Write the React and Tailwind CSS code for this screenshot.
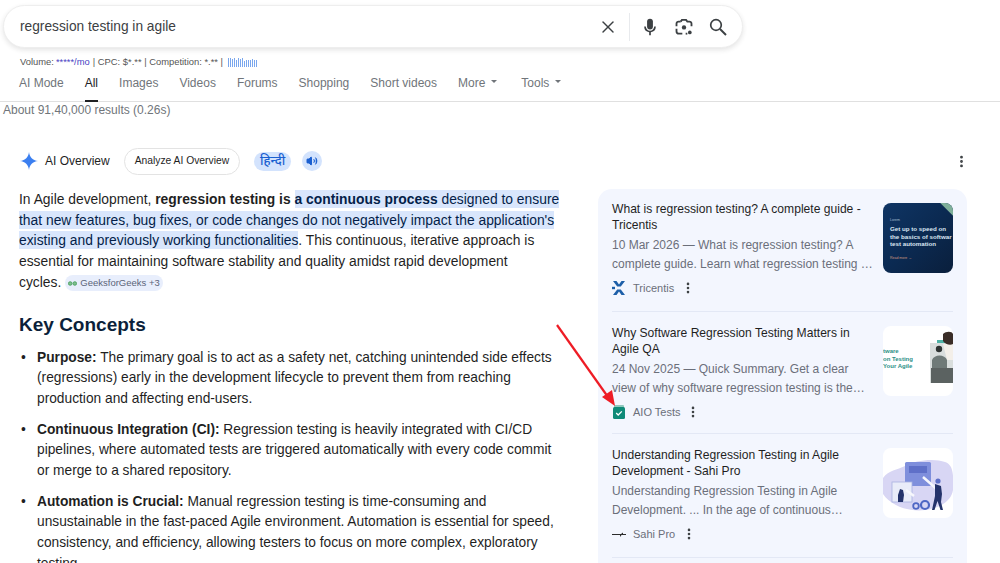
import React from 'react';
import { X, EllipsisVertical, Volume2 } from 'lucide-react';

const tabs = ['AI Mode', 'All', 'Images', 'Videos', 'Forums', 'Shopping', 'Short videos'];

const Spark = ({ size = 20 }) => (
  <svg width={size} height={size} viewBox="0 0 20 20">
    <path d="M10 0 C10.8 6 14 9.2 20 10 C14 10.8 10.8 14 10 20 C9.2 14 6 10.8 0 10 C6 9.2 9.2 6 10 0Z" fill="#3b7ff0" />
  </svg>
);

const MicIcon = () => (
  <svg width="20" height="20" viewBox="0 0 24 24" fill="#3c4043">
    <rect x="8.5" y="2" width="7" height="13" rx="3.5" />
    <path d="M5 11.5h2a5 5 0 0 0 10 0h2a7 7 0 0 1-6 6.8V22h-2v-3.7a7 7 0 0 1-6-6.8z" />
  </svg>
);

const LensIcon = () => (
  <svg width="20" height="20" viewBox="0 0 24 24" fill="none" stroke="#3c4043" strokeWidth="2.2">
    <path d="M8 5.5 9.500 3.500h5L16 5.500h2.500a2.500 2.500 0 0 1 2.500 2.500v3" />
    <path d="M3 11V8a2.500 2.500 0 0 1 2.500-2.500H8" />
    <path d="M3 14v3a3 3 0 0 0 3 3h4" />
    <path d="M14 20h2" />
    <circle cx="12" cy="12.500" r="2.600" fill="#3c4043" stroke="none" />
    <circle cx="19" cy="18.500" r="2.200" fill="#3c4043" stroke="none" />
  </svg>
);

const SearchIcon = () => (
  <svg width="20" height="20" viewBox="0 0 20 20" fill="none" stroke="#3c4043" strokeWidth="1.700">
    <circle cx="8" cy="8" r="5.300" />
    <path d="M12 12l6 6" strokeWidth="2" />
  </svg>
);

const TricentisLogo = () => (
  <svg width="14" height="14" viewBox="0 0 14 14" fill="#1d5fa8">
    <path d="M1 0h3.500L7 3.500 9.500 0H13L8.800 5.500H5.200z" />
    <path d="M5.200 8.500h3.600L13 14H9.500L7 10.500 4.500 14H1z" />
    <rect x="0" y="5.800" width="3" height="2.400" />
  </svg>
);

const AioLogo = () => (
  <svg width="12" height="14" viewBox="0 0 12 14">
    <rect x="1" y="0" width="10" height="3" rx="1" fill="#8fc8bd" />
    <rect x="0" y="2" width="12" height="12" rx="1.500" fill="#0f8a78" />
    <path d="M3.200 8l2 2 3.600-3.600" fill="none" stroke="#fff" strokeWidth="1.300" />
  </svg>
);

const SahiLogo = () => (
  <svg width="14" height="8" viewBox="0 0 14 8">
    <path d="M0 4h9l2-1.500v1.500h3v1H9.500L8 7V5H0z" fill="#2b2b2b" />
  </svg>
);

const ThumbTricentis = () => (
  <div className="relative mt-[1px] w-[70px] h-[70px] rounded-lg overflow-hidden bg-gradient-to-br from-[#0f3564] via-[#0b2a52] to-[#0a1f3c] pl-[7px] pt-[15px] shrink-0">
    <div className="absolute -top-[9px] -right-[9px] w-[18px] h-[18px] rotate-45 bg-[#7fb09a]" />
    <div className="text-[3.500px] leading-[4px] text-[#a9bcd2]">Lorem</div>
    <div className="text-[6.200px] leading-[7.700px] whitespace-nowrap mt-[3px] font-bold text-[#dbe6f2]">
      Get up to speed on
      <br />
      the basics of softwar
      <br />
      test automation
    </div>
    <div className="text-[3.500px] leading-[4px] mt-[8px] text-[#d29a80]">Read more →</div>
  </div>
);

const ThumbAio = () => (
  <div className="relative w-[70px] h-[70px] rounded-lg overflow-hidden bg-white shrink-0">
    <div className="pt-[22px] text-[6px] leading-[7.500px] font-bold text-[#2c8f86] whitespace-nowrap">
      tware
      <br />
      on Testing
      <br />
      Your Agile
    </div>
    <svg className="absolute inset-0" width="70" height="70" viewBox="0 0 70 70">
      <rect x="47" y="17" width="23" height="40" fill="#d9dedd" />
      <rect x="54" y="14" width="8" height="3" fill="#4fb3a6" />
      <path d="M60 18h10v16h-6z" fill="#f3efe9" />
      <path d="M60 8c3-3 9-3 10 0v10c-3 2-8 0-10-3z" fill="#3a2d27" />
      <circle cx="56" cy="23" r="3.200" fill="#2f3433" />
      <path d="M49 34c2-6 13-6 15 0v10H49z" fill="#6f7a78" />
      <path d="M48 42h22v15H48z" fill="#5b6261" />
    </svg>
  </div>
);

const ThumbSahi = () => (
  <div className="w-[70px] h-[70px] rounded-lg overflow-hidden bg-white shrink-0">
    <svg width="70" height="70" viewBox="0 0 70 70">
      <path d="M0 30c6-8 14-8 22-12 10-6 30-8 40-4 10 3 8 18 8 28-2 12-14 18-28 20-16 2-34-4-42-16z" fill="#d8d6f4" />
      <rect x="22" y="14" width="26" height="24" rx="1.500" fill="#7f8fdc" />
      <rect x="26" y="18" width="18" height="7" fill="#5f70c8" />
      <rect x="9" y="34" width="20" height="20" fill="#e9ecf9" stroke="#a9b2e0" strokeWidth="0.800" />
      <path d="M17 41l3 1 1 5-1 7h-5v-7z" fill="#24336b" />
      <path d="M23 42l8 6M40 29l8 7 10 9" stroke="#f6f7fc" strokeWidth="2.500" fill="none" />
      <path d="M52 36l6 2 1 8-1 8 2 8h-2.500l-3-9-3 9H49l3-14z" fill="#24336b" />
      <circle cx="55" cy="33" r="2.600" fill="#5f70c8" />
      <circle cx="33" cy="58" r="2.800" fill="none" stroke="#4f67c4" strokeWidth="1.800" />
      <circle cx="42" cy="57" r="4" fill="none" stroke="#4f67c4" strokeWidth="2.200" />
    </svg>
  </div>
);

const Source = ({ logo, name, gap }) => (
  <div className="flex items-center h-[16px]">
    <div className="w-[14px] flex justify-center">{logo}</div>
    <span className="ml-[7px] text-[11px] text-[#6b6f7a]">{name}</span>
    <EllipsisVertical size={14} strokeWidth={2.500} className={`text-[#3c4043] ${gap}`} />
  </div>
);

const Card = ({ title, date, body, thumb, logo, name, gap, size }) => (
  <div className={`flex justify-between ${size} border-b border-[#e3e8f5]`}>
    <div className="w-[264px]">
      <div className="text-[12.100px] leading-[15.500px] text-[#1f1f1f] whitespace-nowrap">{title}</div>
      <div className="mt-[3px] text-[12px] leading-[19px] text-[#6b6f7a] whitespace-nowrap">
        {date}
        {body}
      </div>
      <div className="mt-[6px]">
        <Source logo={logo} name={name} gap={gap} />
      </div>
    </div>
    {thumb}
  </div>
);

export default function App() {
  return (
    <div className="relative h-[563px] w-[1000px] overflow-hidden bg-white font-['Liberation_Sans',Arial,sans-serif]">
      {/* Search box */}
      <div className="pt-[5px] pl-[3px]">
        <div className="flex items-center w-[740px] h-[43px] rounded-full bg-white border border-[#eeeeee] shadow-[0_2px_5px_rgba(32,33,36,0.12)] pl-[16px] pr-[14px]">
          <span className="flex-1 pt-[2px] text-[13.750px] text-[#3c4043]">regression testing in agile</span>
          <X size={20} strokeWidth={1.700} className="text-[#3c4043]" />
          <div className="w-px h-[28px] bg-[#e8eaed] ml-[11px] mr-[10px]" />
          <MicIcon />
          <div className="w-[14px]" />
          <LensIcon />
          <div className="w-[14px]" />
          <SearchIcon />
        </div>
      </div>

      {/* Keyword stats */}
      <div className="mt-[6px] pl-[20px] flex items-center text-[9.400px] leading-[16px] text-[#555]">
        Volume: <span className="text-[#4a3fc4] ml-[2px]">*****/mo</span>
        <span className="ml-[3px]">| CPC: $*.** | Competition: *.** |</span>
        <div className="ml-[5px] flex items-end gap-[1px] h-[9px]">
          {[9, 9, 8, 9, 7, 9, 8, 9, 6, 7, 7, 7, 8, 7, 7].map((h, i) => (
            <div key={i} className="w-[1px] bg-[#7aa7ee]" style={{ height: h }} />
          ))}
        </div>
      </div>

      {/* Tabs */}
      <div className="h-[32px] border-b border-[#e0e0e0] flex pl-[19px] text-[12px] text-[#70757a]">
        {tabs.map((t) => (
          <div
            key={t}
            className={`h-[32px] pt-[4px] mr-[21px] ${t === 'All' ? 'text-[#202124] border-b-[2px] border-[#202124]' : ''}`}
          >
            {t}
          </div>
        ))}
        <div className="pt-[4px] flex mr-[24px]">
          More
          <span className="ml-[6px] mt-[6px] w-0 h-0 border-x-[3.500px] border-x-transparent border-t-[3.500px] border-t-[#70757a]" />
        </div>
        <div className="pt-[4px] flex">
          Tools
          <span className="ml-[6px] mt-[6px] w-0 h-0 border-x-[3.500px] border-x-transparent border-t-[3.500px] border-t-[#70757a]" />
        </div>
      </div>

      <div className="pl-[3px] text-[12px] leading-[16px] text-[#70757a]">About 91,40,000 results (0.26s)</div>

      {/* AI Overview header */}
      <div className="mt-[28px] pl-[20px] pr-[31px] flex items-center h-[30px]">
        <Spark size={18} />
        <span className="ml-[7px] text-[12px] text-[#1f1f1f]">AI Overview</span>
        <div className="ml-[14px] h-[27px] px-[10px] flex items-center rounded-full border border-[#e3e3e3] text-[10.300px] text-[#1f1f1f]">
          Analyze AI Overview
        </div>
        <div className="ml-[14px] h-[19px] w-[37px] flex items-center justify-center rounded-full bg-[#d3e3fd] text-[13px] font-medium font-['Noto_Sans','Liberation_Sans',sans-serif] text-[#1a5fd0]">
          हिन्दी
        </div>
        <div className="ml-[11px] h-[20px] w-[20px] flex items-center justify-center rounded-full bg-[#d3e3fd]">
          <Volume2 size={12} fill="#1a5fd0" className="text-[#1a5fd0]" />
        </div>
        <EllipsisVertical size={15} strokeWidth={2.500} className="ml-auto text-[#3c4043]" />
      </div>

      {/* Body */}
      <div className="flex mt-[13px]">
        <div className="w-[598px] shrink-0 pl-[19px] pr-[36px] text-[#1f1f1f]">
          <p className="text-[13.850px] leading-[20.700px] whitespace-nowrap">
            In Agile development, <b>regression testing is</b>{' '}
            <span className="bg-[#d9e6fc] text-[#041e49] py-[1px] box-decoration-clone">
              <b>a continuous process</b> designed to ensure
              <br />
              that new features, bug fixes, or code changes do not negatively impact the application's
              <br />
              existing and previously working functionalities
            </span>
            . This continuous, iterative approach is
            <br />
            essential for maintaining software stability and quality amidst rapid development
            <br />
            cycles.
            <span className="ml-[4px] inline-flex items-center h-[16px] px-[3px] rounded-full bg-[#e8eefc] text-[9.500px] text-[#5b6478] align-[1px]">
              <svg width="9" height="5" viewBox="0 0 9 5" className="mr-[3px]">
                <circle cx="2.200" cy="2.500" r="1.800" fill="#7fbf8e" stroke="#3f9a56" strokeWidth="0.800" />
                <circle cx="6.800" cy="2.500" r="1.800" fill="#7fbf8e" stroke="#3f9a56" strokeWidth="0.800" />
              </svg>
              GeeksforGeeks +3
            </span>
          </p>
          <h2 className="mt-[19px] text-[19px] leading-[26px] font-bold text-[#0b1f3a]">Key Concepts</h2>
          <ul className="mt-[10px] flex flex-col gap-[10px] text-[13.760px] leading-[20.700px] whitespace-nowrap">
            <li className="flex">
              <span className="w-[18px] shrink-0 pl-[2px]">•</span>
              <div>
                <b>Purpose:</b> The primary goal is to act as a safety net, catching unintended side effects
                <br />
                (regressions) early in the development lifecycle to prevent them from reaching
                <br />
                production and affecting end-users.
              </div>
            </li>
            <li className="flex">
              <span className="w-[18px] shrink-0 pl-[2px]">•</span>
              <div>
                <b>Continuous Integration (CI):</b> Regression testing is heavily integrated with CI/CD
                <br />
                pipelines, where automated tests are triggered automatically with every code commit
                <br />
                or merge to a shared repository.
              </div>
            </li>
            <li className="flex">
              <span className="w-[18px] shrink-0 pl-[2px]">•</span>
              <div>
                <b>Automation is Crucial:</b> Manual regression testing is time-consuming and
                <br />
                unsustainable in the fast-paced Agile environment. Automation is essential for speed,
                <br />
                consistency, and efficiency, allowing testers to focus on more complex, exploratory
                <br />
                testing.
              </div>
            </li>
          </ul>
        </div>

        {/* Sources panel */}
        <div className="w-[369px] h-[400px] rounded-t-[14px] bg-[#f3f6fe] px-[14px]">
          <Card
            title={<>What is regression testing? A complete guide -<br />Tricentis</>}
            date="10 Mar 2026 — "
            body={<>What is regression testing? A<br />complete guide. Learn what regression testing …</>}
            thumb={<ThumbTricentis />}
            logo={<TricentisLogo />}
            name="Tricentis"
            gap="ml-[7px]"
            size="h-[123px] pt-[13px]"
          />
          <Card
            title={<>Why Software Regression Testing Matters in<br />Agile QA</>}
            date="24 Nov 2025 — "
            body={<>Quick Summary. Get a clear<br />view of why software regression testing is the…</>}
            thumb={<ThumbAio />}
            logo={<AioLogo />}
            name="AIO Tests"
            gap="ml-[6px]"
            size="h-[122px] pt-[14px]"
          />
          <Card
            title={<>Understanding Regression Testing in Agile<br />Development - Sahi Pro</>}
            date=""
            body={<>Understanding Regression Testing in Agile<br />Development. ... In the age of continuous…</>}
            thumb={<ThumbSahi />}
            logo={<SahiLogo />}
            name="Sahi Pro"
            gap="ml-[7px]"
            size="h-[124px] pt-[14px]"
          />
        </div>
      </div>

      {/* Red annotation arrow */}
      <svg className="absolute left-[550px] top-[318px]" width="70" height="95" viewBox="0 0 70 95">
        <path d="M7 7 L58 79" stroke="#ee1c25" strokeWidth="2.200" />
        <path d="M65 88 L52 79 L62 72z" fill="#ee1c25" />
      </svg>
    </div>
  );
}
